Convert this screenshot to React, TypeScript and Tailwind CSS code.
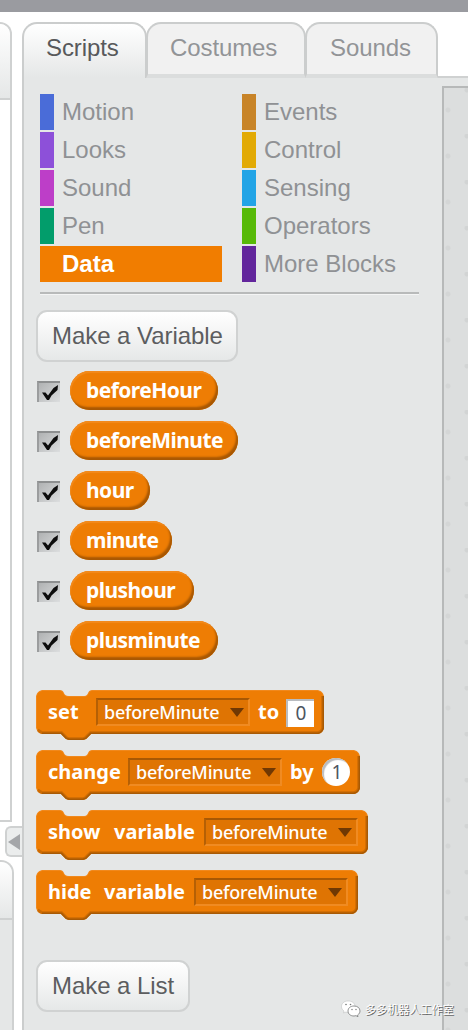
import type { ReactNode } from "react";

type Category = {
  name: string;
  swatch: string;
  selected?: boolean;
};

const leftCategories: Category[] = [
  { name: "Motion", swatch: "bg-[#4a6cd8]" },
  { name: "Looks", swatch: "bg-[#8d50d9]" },
  { name: "Sound", swatch: "bg-[#bd3ec8]" },
  { name: "Pen", swatch: "bg-[#029d6b]" },
  { name: "Data", swatch: "bg-[#f17d00]", selected: true },
];

const rightCategories: Category[] = [
  { name: "Events", swatch: "bg-[#c88428]" },
  { name: "Control", swatch: "bg-[#e2aa05]" },
  { name: "Sensing", swatch: "bg-[#22a4e6]" },
  { name: "Operators", swatch: "bg-[#57b908]" },
  { name: "More Blocks", swatch: "bg-[#62269c]" },
];

const variables = [
  { name: "beforeHour", width: "w-[148px]" },
  { name: "beforeMinute", width: "w-[168px]" },
  { name: "hour", width: "w-[80px]" },
  { name: "minute", width: "w-[102px]" },
  { name: "plushour", width: "w-[124px]" },
  { name: "plusminute", width: "w-[148px]" },
];

function CategoryList({ items }: { items: Category[] }) {
  return (
    <ul className="flex w-[182px] flex-col gap-[2px]">
      {items.map((item) => (
        <li
          key={item.name}
          className={
            item.selected
              ? "flex h-9 bg-[#f17d00] font-bold text-white"
              : "flex h-9 text-[#8f9194]"
          }
        >
          <span className={`w-[14px] ${item.swatch}`} />
          <span className="pl-2 text-2xl leading-9 whitespace-nowrap">{item.name}</span>
        </li>
      ))}
    </ul>
  );
}

function PanelButton({ children, className }: { children: ReactNode; className: string }) {
  return (
    <button
      className={`h-[52px] rounded-[11px] border-2 border-[#d0d2d2] bg-linear-to-b from-white to-[#e6e8e8] pl-[14px] text-left text-2xl leading-[48px] tracking-[-0.05px] whitespace-nowrap text-[#5c5d5f] ${className}`}
    >
      {children}
    </button>
  );
}

function Checkbox() {
  return (
    <span className="mt-[3px] ml-px h-[21px] w-[23px] border-t-2 border-l-2 border-t-[#8d8f90] border-l-[#9b9d9e] bg-linear-to-br from-[#b0b2b3] to-[#dcdedf]">
      <svg viewBox="0 0 21 19" className="h-[19px] w-[21px]" fill="none" aria-hidden="true">
        <path d="M3 9.500h3.500l2.500 3L14.500 5l4.500-3-.5 5-6 5.500L10 17 8 17z" fill="#0c0c0c" />
      </svg>
    </span>
  );
}

function Variable({ name, width }: { name: string; width: string }) {
  return (
    <div className="flex h-[50px] gap-[10px] pt-2">
      <Checkbox />
      <span
        className={`-mt-[7px] h-[39px] rounded-full bg-[#ee7d04] pl-4 font-['Noto_Sans'] text-[21px] leading-[38px] font-bold tracking-[-0.55px] text-white shadow-[inset_-2px_-3px_2px_#a85803,inset_1px_2px_1px_#f28a1c] ${width}`}
      >
        {name}
      </span>
    </div>
  );
}

// Stack block outline: notch on the top edge, bump on the bottom one
function blockPath(w: number) {
  return `M0 6Q1 1 6 0H24Q27 0 28 3T33 6H48Q51 6 52 3T56 0H${w - 6}Q${w - 1} 1 ${w} 6V38Q${w - 1} 43 ${w - 6} 44H55L50 49 47 50H33L30 49 25 44H6Q1 43 0 38Z`;
}

function Block({ id, width, children }: { id: string; width: number; children: ReactNode }) {
  const d = blockPath(width);
  return (
    <div className="relative h-[60px]">
      <svg width={width} height="50" className="absolute top-0 left-0" aria-hidden="true">
        <clipPath id={id}>
          <path d={d} />
        </clipPath>
        <g clipPath={`url(#${id})`}>
          <path d={d} fill="#ee7d04" />
          <path d={d} fill="none" stroke="#f49a3c" strokeOpacity=".45" strokeWidth="2" />
          <path
            d={`M${width} 6V38Q${width - 1} 43 ${width - 6} 44H55L50 49 47 50H33L30 49 25 44H6L1 41`}
            fill="none"
            stroke="#cc6b03"
            strokeWidth="5.500"
          />
          <path
            d={`M${width} 6V38Q${width - 1} 43 ${width - 6} 44H55L50 49 47 50H33L30 49 25 44H6`}
            fill="none"
            stroke="#a85a05"
            strokeWidth="3"
          />
        </g>
      </svg>
      <div className="relative flex h-11 pl-3 font-['Noto_Sans'] text-[20px] leading-[43px] font-bold whitespace-pre text-white">
        {children}
      </div>
    </div>
  );
}

function VariableMenu() {
  return (
    <span className="mt-2 flex h-7 w-[154px] items-center justify-between border-2 border-t-[#a85803] border-r-[#f08b22] border-b-[#f08b22] border-l-[#b56005] bg-[#df7403] pr-1 pl-[6px] text-[18px] leading-6 font-medium tracking-[-0.2px]">
      <span className="-mt-[1px]">beforeMinute</span>
      <svg viewBox="0 0 14 9" className="h-[9px] w-[14px] shrink-0" aria-hidden="true">
        <path d="M0 0H14L7 9Z" fill="#703803" />
      </svg>
    </span>
  );
}

function Stage() {
  return (
    <div className="flex w-[22px] shrink-0 flex-col pt-[10px]">
      <div className="h-[800px] w-3 rounded-tr-[13px] border-t-2 border-r-2 border-b-2 border-[#cfd1d1] bg-white">
        <div className="h-[76px] rounded-tr-[11px] border-b-2 border-[#cfd1d1] bg-linear-to-b from-white to-[#e5e7e7]" />
      </div>
      <div className="mt-1 ml-[5px] flex h-[31px] w-[17px] items-center justify-end rounded-l-md border-y-2 border-l-2 border-[#cfd1d1] bg-[#ebeded]">
        <svg viewBox="0 0 12 16" className="mr-[2px] h-4 w-3 shrink-0" aria-hidden="true">
          <path d="M12 0V16L0 8Z" fill="#a4a6a9" />
        </svg>
      </div>
      <div className="mt-[3px] mr-2 flex-1 rounded-tr-[13px] border-t-2 border-r-2 border-[#cfd1d1] bg-[#e5e7e7]">
        <div className="h-[58px] rounded-tr-[11px] border-b-2 border-[#cfd1d1] bg-linear-to-b from-white to-[#e5e7e7]" />
      </div>
    </div>
  );
}

function Tabs() {
  return (
    <div className="flex h-14 text-2xl leading-[48px] tracking-[-0.1px] text-[#929497]">
      <div className="w-[125px] rounded-t-[15px] border-x-2 border-t-2 border-[#cbcdcd] bg-linear-to-b from-white to-[#e5e7e7] pl-[22px] text-[#58595b]">
        Scripts
      </div>
      <div className="-ml-px w-[160px] rounded-t-[15px] border-x-2 border-t-2 border-b-4 border-[#cbcdcd] border-b-[#dbdddd] bg-[#f1f1f1] pl-[22px]">
        Costumes
      </div>
      <div className="-ml-px w-[133px] rounded-t-[15px] border-x-2 border-t-2 border-b-4 border-[#cbcdcd] border-b-[#dbdddd] bg-[#f1f1f1] pl-[23px]">
        Sounds
      </div>
      <div className="flex-1 border-b-2 border-[#cfd1d1]" />
    </div>
  );
}

function Watermark() {
  return (
    <div className="absolute top-[1000px] left-[341px] flex items-center gap-1">
      <svg viewBox="0 0 20 18" className="h-[18px] w-5" aria-hidden="true">
        <path d="M7 1C3 1 .5 3.5.5 6.5c0 2 1 3.5 2.5 4.5l-.5 2 2.5-1 2 .5c4 0 7-2.500 7-6S11 1 7 1Z" fill="white" stroke="#b9bbbb" strokeWidth=".5" />
        <path d="M13 6c-3.500 0-6 2-6 5s2.500 5 6 5l2-.3 2 1-.4-1.700c1.500-1 2.400-2.300 2.400-4 0-3-2.500-5-6-5Z" fill="white" stroke="#747676" strokeWidth=".8" />
        <g fill="#747676">
          <circle cx="5" cy="4.500" r=".8" />
          <circle cx="9.500" cy="4.500" r=".8" />
          <circle cx="11" cy="9.500" r=".7" />
          <circle cx="15" cy="9.500" r=".7" />
        </g>
      </svg>
      <span className="font-['Noto_Sans_CJK_SC',sans-serif] text-[11px] leading-[18px] tracking-[0.100px] whitespace-nowrap text-white [text-shadow:1px_1px_0_#666]">
        多多机器人工作室
      </span>
    </div>
  );
}

export default function App() {
  return (
    <div className="relative flex h-[1030px] w-[468px] flex-col overflow-hidden bg-white font-['Liberation_Sans',Arial,sans-serif]">
      <div className="h-3 shrink-0 bg-[#9a9ba0]" />
      <div className="flex min-h-0 flex-1">
        <Stage />
        <div className="flex min-w-0 flex-1 flex-col pt-[10px]">
          <Tabs />
          <div className="flex min-h-0 flex-1 border-l-2 border-[#cbcdcd] bg-[#e5e7e7]">
            <div className="w-[418px] shrink-0 pt-4 pl-[12px]">
              <div className="ml-1 flex gap-5">
                <CategoryList items={leftCategories} />
                <CategoryList items={rightCategories} />
              </div>
              <div className="mt-[10px] ml-1 h-[3px] w-[379px] border-t-2 border-b border-t-[#b8baba] border-b-[#f4f5f5]" />
              <PanelButton className="mt-[15px] w-[202px]">Make a Variable</PanelButton>
              <div className="mt-2 flex flex-col">
                {variables.map((v) => (
                  <Variable key={v.name} name={v.name} width={v.width} />
                ))}
              </div>
              <div className="mt-5 flex flex-col">
                <Block id="set" width={288}>
                  <span className="w-12">set</span>
                  <VariableMenu />
                  <span className="w-9 pl-2">to</span>
                  <span className="mt-[9px] h-7 w-7 border-t-2 border-l-2 border-[#b9bcc0] bg-white text-center text-[19px] leading-[25px] font-normal text-[#4d565f]">
                    0
                  </span>
                </Block>
                <Block id="change" width={324}>
                  <span className="w-20">change</span>
                  <VariableMenu />
                  <span className="w-10 pl-2">by</span>
                  <span className="mt-2 h-7 w-7 rounded-full bg-white pl-[2px] text-center text-[19px] leading-[29px] font-normal text-[#4d565f] shadow-[inset_2px_2px_1px_#b9bcc0]">
                    1
                  </span>
                </Block>
                <Block id="show" width={332}>
                  <span className="w-[66px]">show</span>
                  <span className="w-[90px]">variable</span>
                  <VariableMenu />
                </Block>
                <Block id="hide" width={322}>
                  <span className="w-14">hide</span>
                  <span className="w-[90px]">variable</span>
                  <VariableMenu />
                </Block>
              </div>
              <PanelButton className="mt-[30px] w-[154px]">Make a List</PanelButton>
            </div>
            {/* Script area, with its faint dot grid */}
            <div className="mt-2 flex-1 border-t-2 border-l-2 border-[#b7b9b9] bg-[#dcdede] bg-[radial-gradient(circle_at_4px_22px,#d4d6d6_2px,transparent_3px),radial-gradient(circle_at_23px_2px,#d2d4d4_2px,transparent_3px)] bg-size-[40px_46px]" />
          </div>
        </div>
      </div>
      <Watermark />
    </div>
  );
}
